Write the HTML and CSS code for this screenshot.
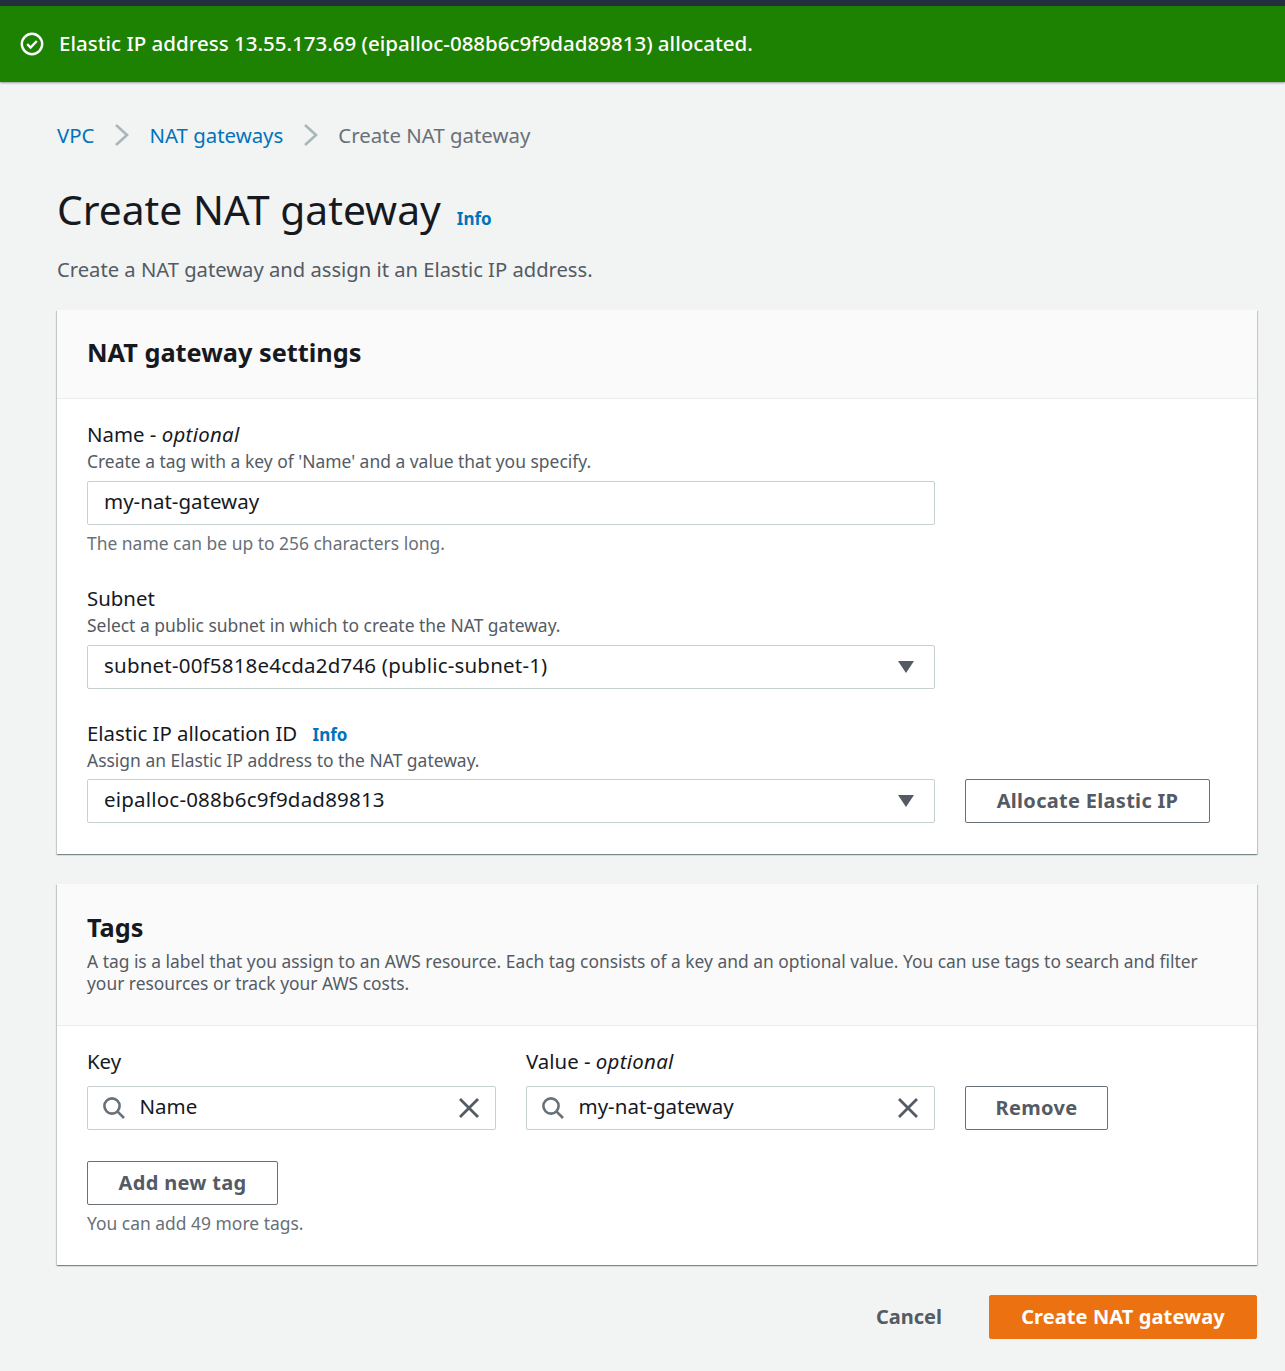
FILE: index.html
```html
<!DOCTYPE html>
<html lang="en">
<head>
    <meta charset="UTF-8">
    <title>Create NAT gateway</title>
    <link rel="stylesheet" href="styles.css">
</head>
<body>
    <div class="topbar"></div>
    <div class="flash">
        <svg class="flash-icon" width="24" height="24" viewBox="0 0 24 24" fill="none" stroke="#fff">
            <circle cx="12" cy="12" r="10.2" stroke-width="2.4"/>
            <path d="M7.2 12.2l3.4 3.4 6.2-6.6" stroke-width="2.4"/>
        </svg>
        <span class="flash-text">Elastic IP address 13.55.173.69 (eipalloc-088b6c9f9dad89813) allocated.</span>
    </div>

    <main class="content">
        <nav class="crumbs">
            <a href="#">VPC</a>
            <svg class="crumb-sep" width="16" height="24" viewBox="0 0 16 24" fill="none"><path d="M2 2l11 10L2 22" stroke="#aab7b8" stroke-width="2.6"/></svg>
            <a href="#">NAT gateways</a>
            <svg class="crumb-sep" width="16" height="24" viewBox="0 0 16 24" fill="none"><path d="M2 2l11 10L2 22" stroke="#aab7b8" stroke-width="2.6"/></svg>
            <span>Create NAT gateway</span>
        </nav>

        <div class="page-title">
            <h1>Create NAT gateway</h1>
            <a href="#" class="info">Info</a>
        </div>
        <p class="page-sub">Create a NAT gateway and assign it an Elastic IP address.</p>

        <section class="card card-settings">
            <div class="card-head">
                <h2>NAT gateway settings</h2>
            </div>
            <div class="card-body">
                <div class="field field-name">
                    <div class="label">Name - <i>optional</i></div>
                    <div class="desc">Create a tag with a key of 'Name' and a value that you specify.</div>
                    <div class="input wide"><span>my-nat-gateway</span></div>
                    <div class="desc hint">The name can be up to 256 characters long.</div>
                </div>
                <div class="field field-subnet">
                    <div class="label">Subnet</div>
                    <div class="desc">Select a public subnet in which to create the NAT gateway.</div>
                    <div class="input wide select">
                        <span>subnet-00f5818e4cda2d746 (public-subnet-1)</span>
                        <svg width="16" height="12" viewBox="0 0 16 12"><path d="M0 0h16L8 12z" fill="#545b64"/></svg>
                    </div>
                </div>
                <div class="field">
                    <div class="label">Elastic IP allocation ID <a href="#" class="info info-inline">Info</a></div>
                    <div class="desc">Assign an Elastic IP address to the NAT gateway.</div>
                    <div class="row">
                        <div class="input wide select">
                            <span>eipalloc-088b6c9f9dad89813</span>
                            <svg width="16" height="12" viewBox="0 0 16 12"><path d="M0 0h16L8 12z" fill="#545b64"/></svg>
                        </div>
                        <button class="btn">Allocate Elastic IP</button>
                    </div>
                </div>
            </div>
        </section>

        <section class="card card-tags">
            <div class="card-head tags-head">
                <h2>Tags</h2>
                <div class="desc">A tag is a label that you assign to an AWS resource. Each tag consists of a key and an optional value. You can use tags to search and filter your resources or track your AWS costs.</div>
            </div>
            <div class="card-body tags-body">
                <div class="tag-row">
                    <div class="tag-col">
                        <div class="label">Key</div>
                        <div class="input search">
                            <svg width="24" height="24" viewBox="0 0 24 24" fill="none" stroke="#687078" stroke-width="2.6"><circle cx="10" cy="10" r="7.6"/><path d="M15.6 15.6l6.4 6.4"/></svg>
                            <span class="search-text">Name</span>
                            <svg width="22" height="22" viewBox="0 0 22 22" fill="none" stroke="#545b64" stroke-width="2.8"><path d="M2 2l18 18M20 2L2 20"/></svg>
                        </div>
                    </div>
                    <div class="tag-col">
                        <div class="label">Value - <i>optional</i></div>
                        <div class="input search">
                            <svg width="24" height="24" viewBox="0 0 24 24" fill="none" stroke="#687078" stroke-width="2.6"><circle cx="10" cy="10" r="7.6"/><path d="M15.6 15.6l6.4 6.4"/></svg>
                            <span class="search-text">my-nat-gateway</span>
                            <svg width="22" height="22" viewBox="0 0 22 22" fill="none" stroke="#545b64" stroke-width="2.8"><path d="M2 2l18 18M20 2L2 20"/></svg>
                        </div>
                    </div>
                    <button class="btn btn-remove">Remove</button>
                </div>
                <button class="btn btn-add">Add new tag</button>
                <div class="desc hint-tags">You can add 49 more tags.</div>
            </div>
        </section>

        <div class="actions">
            <a href="#" class="cancel">Cancel</a>
            <button class="btn btn-primary">Create NAT gateway</button>
        </div>
    </main>
</body>
</html>
```

FILE: styles.css
```css
* {
    box-sizing: border-box;
}
body {
    margin: 0;
    background-color: #f2f3f3;
    color: #16191f;
    font-family: "Noto Sans", "Open Sans", sans-serif;
    font-size: 20.4px;
    line-height: 28px;
}
a {
    color: #0073bb;
    text-decoration: none;
}
.topbar {
    height: 6px;
    background-color: #232f3e;
}
.flash {
    display: flex;
    align-items: center;
    gap: 15px;
    height: 76px;
    padding-left: 20px;
    background-color: #1d8102;
    color: #fff;
    font-size: 20.5px;
    font-weight: 500;
    box-shadow: 0 1px 2px rgba(0, 28, 36, 0.4);
}
.flash-text {
    margin-bottom: 2px;
}
.content {
    padding: 39px 28px 32px 57px;
}
.crumbs {
    display: flex;
    align-items: center;
    height: 28px;
    color: #687078;
}
.crumb-sep {
    margin: 0 19.5px 0 19.5px;
}
.page-title {
    display: flex;
    align-items: baseline;
    gap: 16px;
    margin-top: 32px;
}
h1 {
    margin: 0;
    font-size: 40.75px;
    line-height: 56px;
    font-weight: 400;
}
.info {
    font-size: 17px;
    line-height: 1;
    font-weight: 700;
}
.page-sub {
    margin: 18px 0 27px;
    color: #545b64;
    font-size: 20.2px;
}
.card {
    background-color: #fff;
    box-shadow: 0 1px 1px 0 rgba(0, 28, 36, 0.3), 1px 1px 1px 0 rgba(0, 28, 36, 0.15), -1px 1px 1px 0 rgba(0, 28, 36, 0.15);
}
.card-head {
    height: 89px;
    padding: 26px 30px 0;
    background-color: #fafafa;
    border-bottom: 1px solid #eaeded;
}
h2 {
    margin: 0;
    font-size: 25.3px;
    line-height: 32px;
    font-weight: 700;
}
.card-body {
    padding: 21px 30px 31px;
}
.label {
    line-height: 28px;
}
.label i {
    letter-spacing: 0.3px;
}
.desc {
    margin-top: 2px;
    font-size: 17.45px;
    line-height: 22px;
    color: #545b64;
}
.field-name {
    margin-bottom: 30px;
}
.field-subnet {
    margin-bottom: 30px;
}
.input {
    display: flex;
    align-items: center;
    height: 44px;
    margin-top: 9px;
    padding: 0 16px;
    background-color: #fff;
    border: 1.5px solid #c6d0d0;
    border-radius: 2px;
    font-size: 20.5px;
}
/* noto sits lower than the original font, lift the text a bit */
.input span {
    margin-bottom: 4px;
}
.wide {
    width: 848px;
}
.select {
    justify-content: space-between;
    padding-right: 20px;
    letter-spacing: 0.2px;
}
.hint {
    margin-top: 7px;
    color: #687078;
}
.info-inline {
    margin-left: 10px;
}
.row {
    display: flex;
    align-items: flex-start;
    gap: 30px;
    margin-top: 8px;
}
.row .input {
    margin-top: 0;
}
.row .btn {
    width: 245px;
}
.btn {
    height: 44px;
    background-color: #fff;
    border: 1.5px solid #687078;
    border-radius: 2px;
    color: #545b64;
    font-family: inherit;
    font-size: 20px;
    font-weight: 700;
    letter-spacing: 0.3px;
    padding: 0 0 2px;
}
.card-tags {
    margin-top: 30px;
}
.tags-head {
    height: 142px;
    padding-top: 27px;
}
.tags-head h2 {
    margin-bottom: 7px;
}
.tags-head .desc {
    font-size: 17.4px;
}
.tags-body {
    padding-top: 21px;
    padding-bottom: 31px;
}
.tag-row {
    display: flex;
    align-items: flex-end;
    gap: 30px;
}
.tag-col {
    width: 409px;
}
.search {
    gap: 13.5px;
    margin-top: 11px;
    padding: 0 15px 0 14px;
}
.search-text {
    flex: 1;
}
.btn-remove {
    width: 143px;
}
.btn-add {
    display: block;
    width: 191px;
    margin-top: 31px;
}
.hint-tags {
    margin-top: 7px;
    color: #687078;
}
.actions {
    display: flex;
    justify-content: flex-end;
    align-items: center;
    gap: 47px;
    margin-top: 30px;
}
.cancel {
    color: #545b64;
    font-size: 20px;
    font-weight: 700;
}
.btn-primary {
    width: 268px;
    background-color: #ec7211;
    border-color: #ec7211;
    color: #fff;
    letter-spacing: 0.1px;
}
```
